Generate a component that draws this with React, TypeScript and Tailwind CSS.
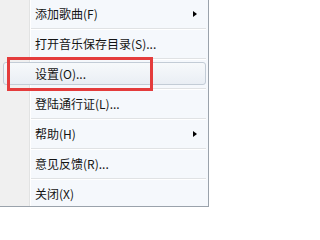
import React from "react";

type Item = { label: string; sub?: boolean; active?: boolean };

const items: Item[] = [
	{ label: "添加歌曲(F)", sub: true },
	{ label: "打开音乐保存目录(S)..." },
	{ label: "设置(O)...", active: true },
	{ label: "登陆通行证(L)..." },
	{ label: "帮助(H)", sub: true },
	{ label: "意见反馈(R)..." },
	{ label: "关闭(X)" },
];

function Arrow() {
	return (
		<span className="ml-auto mr-[11px] w-0 h-0 border-y-[3.5px] border-l-[4px] border-y-transparent border-l-black" />
	);
}

export default function App() {
	return (
		<div
			className="w-[210px] h-[208px] bg-white text-[12px] text-[#141414] leading-none"
			style={{ fontFamily: '"Noto Sans CJK SC", "Noto Sans", sans-serif' }}
		>
			<div className="relative w-[209px] h-[207px] border-r border-b border-[#9aa2ab] bg-[linear-gradient(to_right,#f0f0f0_29px,#e2e3e3_29px,#e2e3e3_30px,#ffffff_30px,#ffffff_31px,#f5f8fc_31px)]">
				{items.map((item, i) => (
					<div key={item.label}>
						{item.active ? (
							<div className="h-[28px] pl-[3px] pr-[2px] pt-[2px] pb-[3px]">
								<div className="h-full flex items-center pl-[31px] rounded-[3px] border border-[#c3ccd6] bg-[linear-gradient(to_bottom,#f7f9fb,#e9eef4)]">
									{item.label}
								</div>
							</div>
						) : (
							<div className="h-[28px] flex items-center pl-[35px]">
								{item.label}
								{item.sub && <Arrow />}
							</div>
						)}
						{i < items.length - 1 && (
							<div className="ml-[31px] mr-[2px]">
								<div className="h-px bg-[#e0e2e4]" />
								<div className="h-px bg-white" />
							</div>
						)}
					</div>
				))}
				{/* annotation box */}
				<div className="absolute left-[7px] top-[57px] w-[146px] h-[34px] border-[3px] border-[#e43c3c]" />
			</div>
		</div>
	);
}
